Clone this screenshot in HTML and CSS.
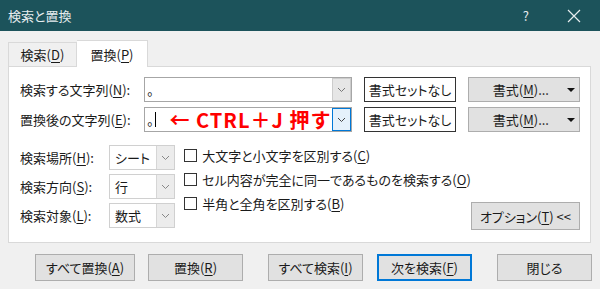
FILE: index.html
```html
<!doctype html>
<html>
  <head>
    <meta charset="UTF-8" />
    <title>検索と置換</title>
    <link rel="stylesheet" href="styles.css">
  </head>
  <body>
    <div class="titlebar">
      <span class="title">検索と置換</span>
      <span class="help">?</span>
      <svg class="close" width="14" height="14" viewBox="0 0 14 14"><path d="M1 1L13 13M13 1L1 13" stroke="#e6ecee" stroke-width="1.2" fill="none"/></svg>
    </div>

    <div class="tabs">
      <div class="tab">検索(<u>D</u>)</div>
      <div class="tab active">置換(<u>P</u>)</div>
    </div>

    <div class="panel">
      <div class="find-row">
        <div class="lbl">検索する文字列(<u>N</u>):</div>
        <div class="combo">
          <div class="val">。</div>
          <div class="drop"><svg width="9" height="6" viewBox="0 0 9 6"><path d="M1 1L4.5 4.5L8 1" stroke="#777" fill="none"/></svg></div>
        </div>
        <button class="btn-clear">書式セットなし</button>
        <button class="btn-fmt"><span>書式(<u>M</u>)...</span><i class="tri"></i></button>
      </div>
      <div class="find-row">
        <div class="lbl">置換後の文字列(<u>E</u>):</div>
        <div class="combo">
          <div class="val">。<span class="caret"></span><span class="note">← CTRL＋J 押す</span></div>
          <div class="drop focus"><svg width="9" height="6" viewBox="0 0 9 6"><path d="M1 1L4.5 4.5L8 1" stroke="#444" fill="none"/></svg></div>
        </div>
        <button class="btn-clear">書式セットなし</button>
        <button class="btn-fmt"><span>書式(<u>M</u>)...</span><i class="tri"></i></button>
      </div>

      <div class="options">
        <div class="selects">
          <div class="sel-row">
            <div class="sel-lbl">検索場所(<u>H</u>):</div>
            <div class="sel"><span>シート</span><div class="drop"><svg width="9" height="6" viewBox="0 0 9 6"><path d="M1 1L4.5 4.5L8 1" stroke="#888" fill="none"/></svg></div></div>
          </div>
          <div class="sel-row">
            <div class="sel-lbl">検索方向(<u>S</u>):</div>
            <div class="sel"><span>行</span><div class="drop"><svg width="9" height="6" viewBox="0 0 9 6"><path d="M1 1L4.5 4.5L8 1" stroke="#888" fill="none"/></svg></div></div>
          </div>
          <div class="sel-row">
            <div class="sel-lbl">検索対象(<u>L</u>):</div>
            <div class="sel"><span>数式</span><div class="drop"><svg width="9" height="6" viewBox="0 0 9 6"><path d="M1 1L4.5 4.5L8 1" stroke="#888" fill="none"/></svg></div></div>
          </div>
        </div>
        <div class="checks">
          <label class="chk"><i class="box"></i>大文字と小文字を区別する(<u>C</u>)</label>
          <label class="chk"><i class="box"></i>セル内容が完全に同一であるものを検索する(<u>O</u>)</label>
          <label class="chk"><i class="box"></i>半角と全角を区別する(<u>B</u>)</label>
        </div>
        <button class="btn-opt">オプション(<u>T</u>) &lt;&lt;</button>
      </div>
    </div>

    <div class="actions">
      <button class="btn w100">すべて置換(<u>A</u>)</button>
      <button class="btn">置換(<u>R</u>)</button>
      <button class="btn gap-l">すべて検索(<u>I</u>)</button>
      <button class="btn default">次を検索(<u>F</u>)</button>
      <button class="btn gap-l">閉じる</button>
    </div>
  </body>
</html>
```

FILE: styles.css
```css
body {
  margin: 0;
  background: #f0f0f0;
  font-family: "Noto Sans CJK JP", "Noto Sans", sans-serif;
  font-size: 13px;
  font-feature-settings: "palt";
  color: #1a1a1a;
  width: 600px;
  height: 289px;
  overflow: hidden;
  white-space: nowrap;
}
u {
  text-decoration: underline;
  text-underline-offset: 2px;
}
button {
  font-family: inherit;
  font-size: 13px;
  font-feature-settings: "palt";
  color: #1a1a1a;
  padding: 0;
  box-sizing: border-box;
  white-space: nowrap;
}

/* title bar */
.titlebar {
  height: 31px;
  background: #1c535b;
  color: #e6ecee;
  display: flex;
  align-items: center;
  padding: 0 0 0 8px;
}
.title {
  font-size: 13px;
}
.help {
  margin-left: auto;
  margin-right: 38px;
  font-size: 13px;
}
.close {
  margin-right: 19px;
}

/* tabs */
.tabs {
  height: 35px;
  display: flex;
  align-items: flex-end;
  padding-left: 8px;
}
.tab {
  width: 69px;
  height: 24px;
  box-sizing: border-box;
  border: 1px solid #d9d9d9;
  border-bottom: none;
  background: #f0f0f0;
  display: flex;
  align-items: center;
  justify-content: center;
}
.tab.active {
  width: 71px;
  height: 27px;
  background: #fff;
  border-left: none;
  margin-bottom: -1px;
  position: relative;
}

.panel {
  margin: 0 9px 0 8px;
  height: 177px;
  box-sizing: border-box;
  border: 1px solid #d9d9d9;
  background: #fff;
  padding: 10px 10px 0 11px;
}

.find-row {
  display: flex;
  align-items: center;
  height: 25px;
}
.find-row + .find-row {
  margin-top: 5px;
}
.lbl {
  width: 124px;
}
.combo {
  width: 208px;
  height: 25px;
  box-sizing: border-box;
  border: 1px solid #a6a6a6;
  display: flex;
}
.combo .val {
  flex: 1;
  padding-left: 2px;
  display: flex;
  align-items: center;
  line-height: 1;
}
.drop {
  width: 17px;
  background: #e6e6e6;
  border: 1px solid #ccc;
  display: flex;
  align-items: center;
  justify-content: center;
}
.drop.focus {
  background: #e5f1fb;
  border-color: #0078d7;
}
.caret {
  width: 1px;
  height: 15px;
  background: #000;
  margin-left: 1px;
}
.note {
  color: #ff0000;
  font-weight: bold;
  font-size: 20px;
  font-feature-settings: normal;
  margin-left: 14px;
  letter-spacing: 1px;
}
.btn-clear {
  margin-left: 12px;
  width: 92px;
  height: 25px;
  border: 1px solid #333;
  background: #fff;
}
.btn-fmt {
  margin-left: 12px;
  width: 112px;
  height: 25px;
  border: 1px solid #adadad;
  background: #e1e1e1;
  display: flex;
  align-items: center;
  justify-content: flex-end;
  padding-right: 4px;
}
.btn-fmt span {
  margin-right: 18px;
}
.tri {
  width: 0;
  height: 0;
  border-left: 4px solid transparent;
  border-right: 4px solid transparent;
  border-top: 4px solid #111;
}

/* options area */
.options {
  display: flex;
  margin-top: 13px;
}
.selects {
  width: 170px;
}
.sel-row {
  display: flex;
  align-items: center;
  height: 25px;
}
.sel-row + .sel-row {
  margin-top: 4px;
}
.sel-lbl {
  width: 89px;
}
.sel {
  width: 66px;
  height: 25px;
  box-sizing: border-box;
  border: 1px solid #d0d0d0;
  display: flex;
}
.sel span {
  flex: 1;
  padding-left: 5px;
  display: flex;
  align-items: center;
}
.sel .drop {
  background: #ececec;
  border: none;
  border-left: 1px solid #d6d6d6;
}
.checks {
  display: flex;
  flex-direction: column;
  gap: 6px;
  padding-top: 1px;
}
.chk {
  display: flex;
  align-items: center;
  height: 18px;
}
.box {
  width: 13px;
  height: 13px;
  box-sizing: border-box;
  border: 1px solid #333;
  background: #fff;
  margin-right: 5px;
}
.btn-opt {
  margin-left: auto;
  align-self: flex-end;
  width: 113px;
  height: 28px;
  border: 1px solid #adadad;
  background: #e1e1e1;
  margin-bottom: -2px;
}

/* bottom buttons */
.actions {
  display: flex;
  padding: 11px 0 0 35px;
  gap: 13px;
}
.btn {
  width: 95px;
  height: 27px;
  border: 1px solid #adadad;
  background: #e1e1e1;
}
.btn.w100 {
  width: 100px;
}
.btn.gap-l {
  margin-left: 12px;
}
.btn.default {
  border: 2px solid #0078d7;
  margin-left: 1px;
}
```
